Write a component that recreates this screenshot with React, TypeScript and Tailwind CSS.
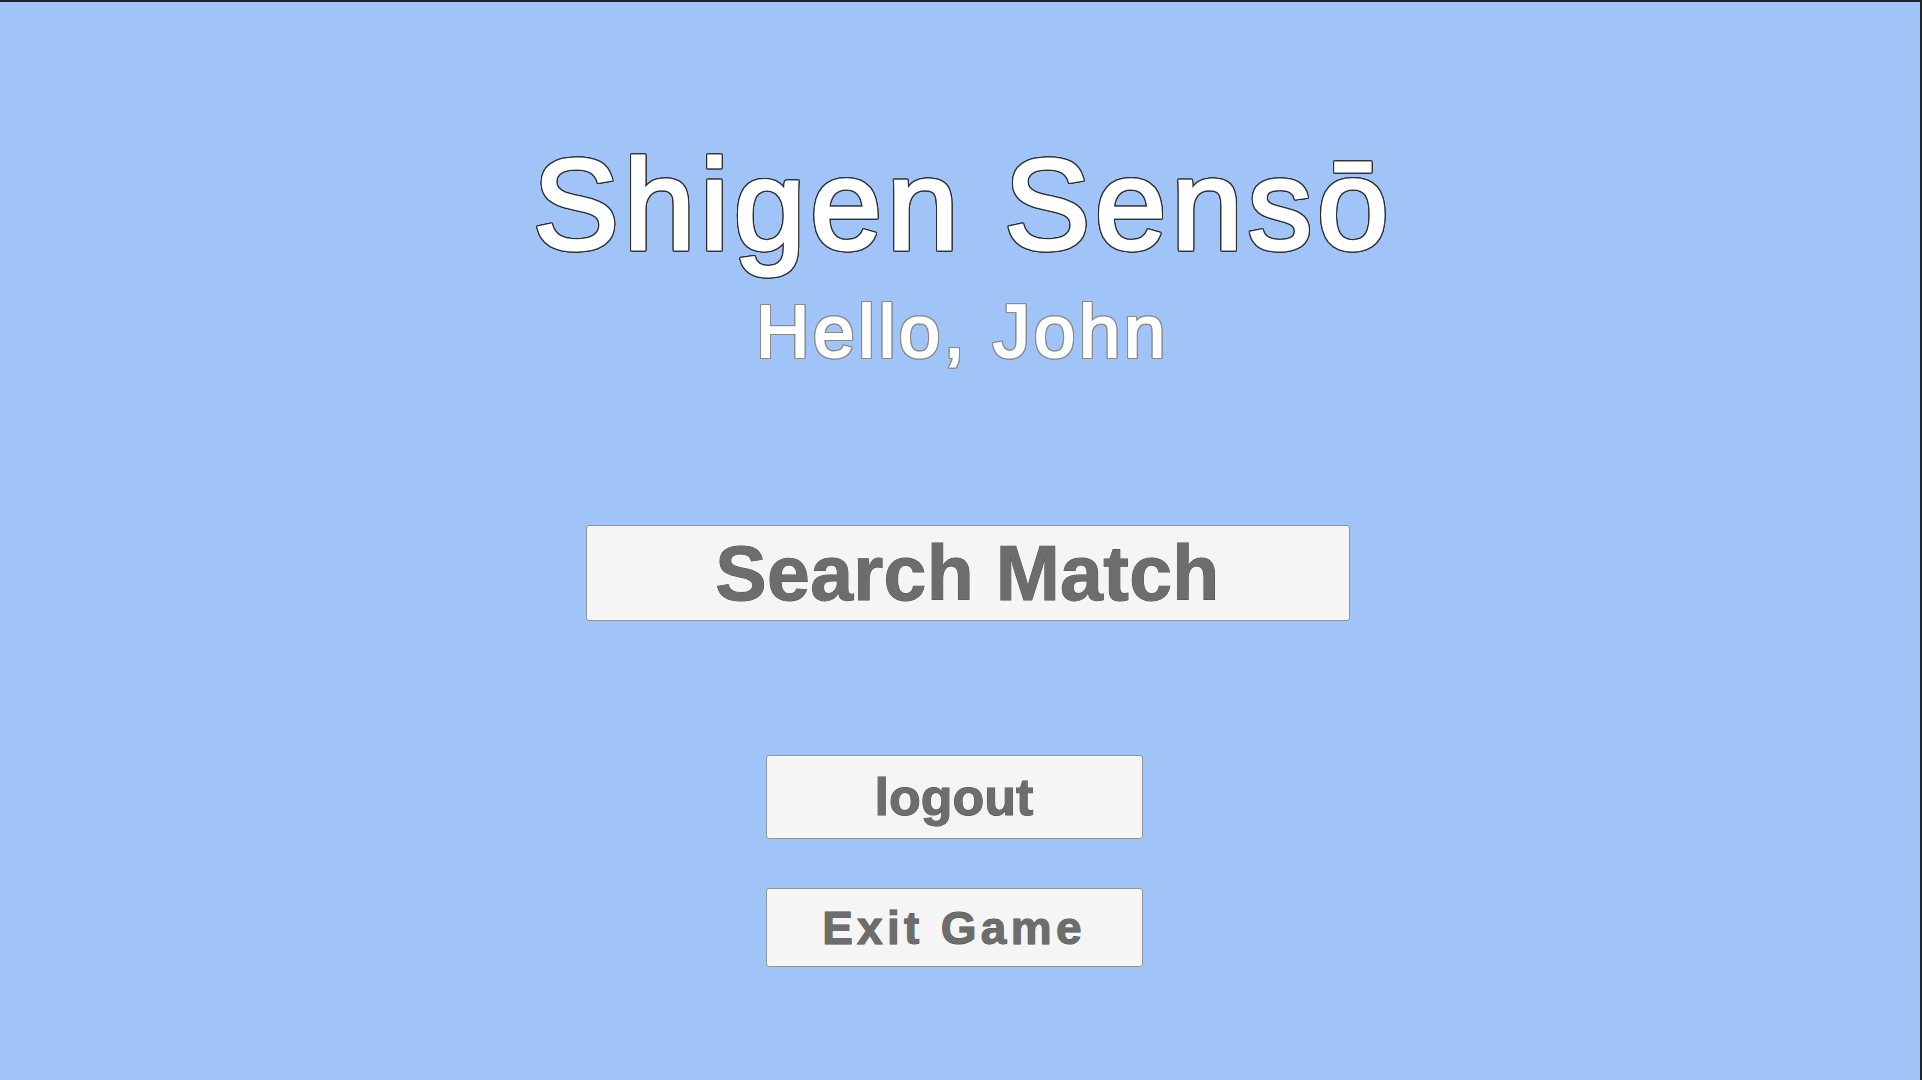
const font = "font-['Liberation_Sans',Arial,sans-serif]";

function MenuButton({
  label,
  className,
  textClass,
}: {
  label: string;
  className: string;
  textClass: string;
}) {
  return (
    <button
      className={`flex items-center justify-center rounded-[3px] border border-[#8f959c] bg-[#f5f5f5] ${className}`}
    >
      <span
        className={`${font} font-bold leading-none text-[#6d6d6d] [-webkit-text-stroke:1px_#4f4f4f] [paint-order:stroke_fill] ${textClass}`}
      >
        {label}
      </span>
    </button>
  );
}

export default function App() {
  return (
    <div className="h-[1080px] w-[1922px] overflow-hidden border-t-2 border-r-2 border-[#232323] bg-[#a0c4f8]">
      <div className="flex flex-col items-center">
        {/* title */}
        <h1
          className={`${font} mt-[139px] ml-[7px] text-[128px] leading-none tracking-[5.3px] text-white [-webkit-text-stroke:3px_#ffffff] [filter:drop-shadow(1px_0_0_#2e2e2e)_drop-shadow(-1px_0_0_#2e2e2e)_drop-shadow(0_1px_0_#2e2e2e)_drop-shadow(0_-1px_0_#2e2e2e)]`}
        >
          Shigen Sensō
        </h1>
        <p
          className={`${font} mt-[26px] ml-[5px] text-[74px] leading-none tracking-[3.9px] text-white [-webkit-text-stroke:2px_#ffffff] [filter:drop-shadow(1px_0_0_#8a8a8a)_drop-shadow(-1px_0_0_#8a8a8a)_drop-shadow(0_1px_0_#8a8a8a)_drop-shadow(0_-1px_0_#8a8a8a)]`}
        >
          Hello, John
        </p>

        {/* menu */}
        <MenuButton
          label="Search Match"
          className="mt-[156px] ml-[15px] h-[96px] w-[764px]"
          textClass="text-[77px] tracking-[0.3px]"
        />
        <MenuButton
          label="logout"
          className="mt-[134px] ml-[-12px] h-[84px] w-[377px]"
          textClass="text-[52px]"
        />
        <MenuButton
          label="Exit Game"
          className="mt-[49px] ml-[-12px] h-[79px] w-[377px]"
          textClass="text-[46px] tracking-[4.3px]"
        />
      </div>
    </div>
  );
}
